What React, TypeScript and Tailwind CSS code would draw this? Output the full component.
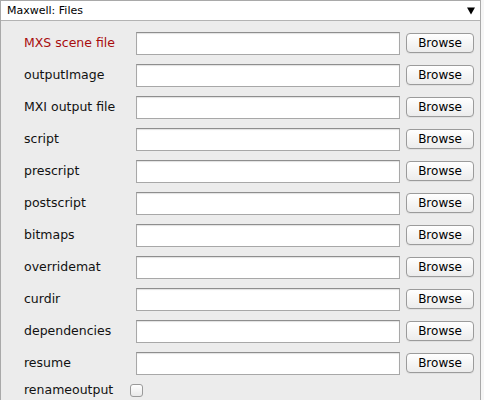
import React from "react";

const rows = [
  { label: "MXS scene file", red: true },
  { label: "outputImage" },
  { label: "MXI output file" },
  { label: "script" },
  { label: "prescript" },
  { label: "postscript" },
  { label: "bitmaps" },
  { label: "overridemat" },
  { label: "curdir" },
  { label: "dependencies" },
  { label: "resume" },
];

export default function App() {
  return (
    <div
      className="w-[484px] h-[400px] overflow-hidden bg-[#f6f6f6]"
      style={{ fontFamily: '"DejaVu Sans", "Liberation Sans", sans-serif' }}
    >
      <div className="w-[481px] border border-[#a9a9a9] bg-[#ececec]">
        <div className="h-[20px] bg-white border-b border-[#b3b3b3] flex items-center justify-between pl-[6px] pr-[5px]">
          <span className="text-[11px] text-black leading-none">Maxwell: Files</span>
          <svg width="8" height="8" viewBox="0 0 8 8">
            <polygon points="0,0.5 8,0.5 4,7.5" fill="#000" />
          </svg>
        </div>
        <div className="pt-[6px] pb-[10px]">
          {rows.map((r) => (
            <div key={r.label} className="h-[32px] flex items-center pl-[23px]">
              <span
                className={`w-[112px] text-[12.5px] leading-none ${r.red ? "text-[#a80d0d]" : "text-[#111]"}`}
              >
                {r.label}
              </span>
              <div className="w-[264px] h-[23px] bg-white border border-[#a8a8a8] border-t-[#8e8e8e] shadow-[inset_0_1px_1px_rgba(0,0,0,0.12)]" />
              <button className="ml-[6px] w-[68px] h-[20px] rounded-[4px] border border-[#9b9b9b] bg-gradient-to-b from-white to-[#ececec] text-[12px] leading-none text-black shadow-[0_1px_0_rgba(0,0,0,0.05)]">
                Browse
              </button>
            </div>
          ))}
          <div className="h-[22px] flex items-center pl-[23px]">
            <span className="w-[106px] text-[12.5px] leading-none text-[#111]">renameoutput</span>
            <div className="w-[13px] h-[13px] rounded-[3px] border border-[#9a9a9a] bg-gradient-to-b from-white to-[#e9e9e9]" />
          </div>
        </div>
      </div>
    </div>
  );
}
